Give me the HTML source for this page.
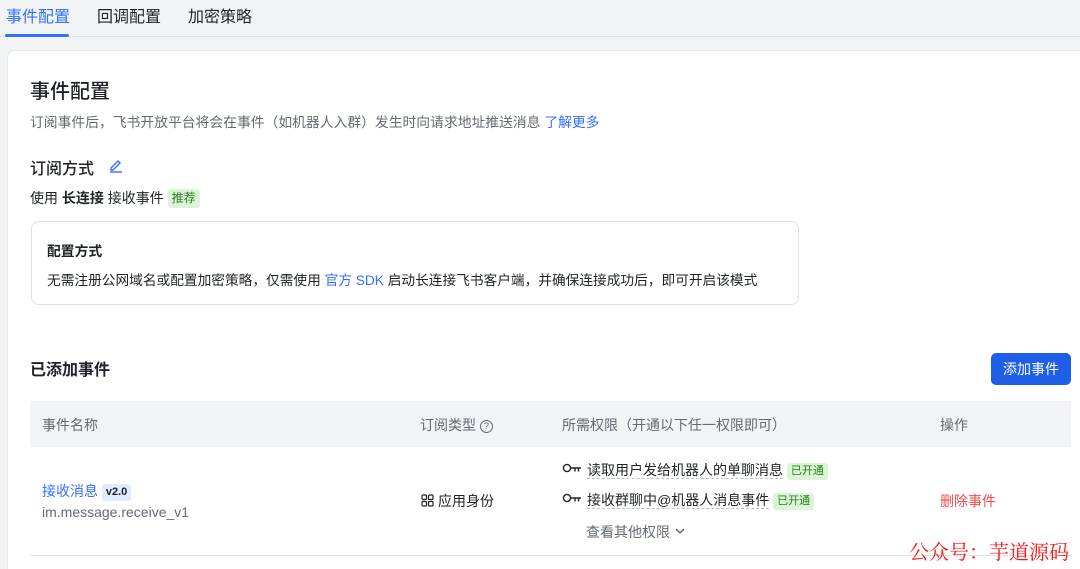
<!DOCTYPE html>
<html><head><meta charset="utf-8"><style>
*{margin:0;padding:0;box-sizing:border-box}
html,body{width:1080px;height:569px;overflow:hidden}
body{background:#f2f3f5;font-family:"Liberation Sans","Noto Sans CJK SC",sans-serif;color:#1f2329;position:relative}
.a{position:absolute;white-space:nowrap}
.card{position:absolute;left:7px;top:50px;width:1090px;height:530px;background:#fff;border-radius:8px;border:1px solid #e6e8eb}
.tag{display:inline-block;border-radius:3px;font-size:11px;padding:0 4px;line-height:17px;vertical-align:1px}
</style></head><body>
<div class="a" style="left:6px;top:3px;font-size:16px;color:#3370ff">事件配置</div>
<div class="a" style="left:97px;top:3px;font-size:16px;color:#1f2329">回调配置</div>
<div class="a" style="left:188px;top:3px;font-size:16px;color:#1f2329">加密策略</div>
<div class="a" style="left:0;top:36px;width:1080px;height:1px;background:#dee0e3"></div>
<div class="a" style="left:5px;top:34px;width:64px;height:3px;background:#3370ff;border-radius:2px"></div>
<div class="card"></div>
<div class="a" style="left:30px;top:75px;font-size:20px;font-weight:500">事件配置</div>
<div class="a" style="left:30px;top:111px;font-size:13.8px;color:#646a73">订阅事件后，飞书开放平台将会在事件（如机器人入群）发生时向请求地址推送消息 <span style="color:#3370ff">了解更多</span></div>
<div class="a" style="left:30px;top:155px;font-size:16px;font-weight:500">订阅方式</div>
<svg class="a" style="left:108px;top:157px" width="16" height="16" viewBox="0 0 16 16"><path d="M3 11l7-7 2 2-7 7H3z" fill="none" stroke="#3370ff" stroke-width="1.4"/><path d="M2 15h12" stroke="#3370ff" stroke-width="1.4"/></svg>
<div class="a" style="left:30px;top:188px;font-size:14px">使用 <b style="font-weight:600">长连接</b> 接收事件 <span class="tag" style="background:#d9f5d6;color:#2d7a1f;font-size:12px;line-height:19px">推荐</span></div>
<div class="a" style="left:31px;top:221px;width:768px;height:84px;border:1px solid #dee0e3;border-radius:8px"></div>
<div class="a" style="left:47px;top:240px;font-size:13.8px;font-weight:600">配置方式</div>
<div class="a" style="left:47px;top:269px;font-size:13.7px">无需注册公网域名或配置加密策略，仅需使用 <span style="color:#3370ff">官方 SDK</span> 启动长连接飞书客户端，并确保连接成功后，即可开启该模式</div>
<div class="a" style="left:30px;top:356px;font-size:16px;font-weight:600">已添加事件</div>
<div class="a" style="left:991px;top:353px;width:80px;height:32px;background:#1f5fe8;border-radius:5px;color:#fff;font-size:14px;line-height:32px;text-align:center">添加事件</div>
<div class="a" style="left:30px;top:401px;width:1041px;height:46px;background:#f2f3f5"></div>
<div class="a" style="left:42px;top:415px;font-size:14px;color:#646a73">事件名称</div>
<div class="a" style="left:420px;top:415px;font-size:14px;color:#646a73">订阅类型 <span style="display:inline-block;width:13px;height:13px;border:1px solid #646a73;border-radius:50%;font-size:9px;line-height:11px;text-align:center;vertical-align:1px">?</span></div>
<div class="a" style="left:562px;top:415px;font-size:14px;color:#646a73">所需权限（开通以下任一权限即可）</div>
<div class="a" style="left:940px;top:415px;font-size:14px;color:#646a73">操作</div>
<div class="a" style="left:42px;top:481px;font-size:14px;color:#3370ff">接收消息 <span class="tag" style="background:#e1eaff;color:#1f2329;font-weight:600">v2.0</span></div>
<div class="a" style="left:42px;top:504px;font-size:14px;color:#646a73">im.message.receive_v1</div>
<svg class="a" style="left:421px;top:494px" width="13" height="13" viewBox="0 0 13 13" fill="none" stroke="#1f2329" stroke-width="1.2"><rect x="1" y="1" width="4.5" height="4.5" rx="1"/><rect x="7.5" y="1" width="4.5" height="4.5" rx="1"/><rect x="1" y="7.5" width="4.5" height="4.5" rx="1"/><rect x="7.5" y="7.5" width="4.5" height="4.5" rx="1"/></svg>
<div class="a" style="left:438px;top:491px;font-size:14px">应用身份</div>
<svg class="a" style="left:562px;top:463px" width="20" height="12" viewBox="0 0 20 12" fill="none" stroke="#1f2329" stroke-width="1.4"><circle cx="5" cy="5" r="3.6"/><path d="M8.6 5H19M13 5v3.5M16.5 5v3.5"/></svg>
<div class="a" style="left:587px;top:460px;font-size:14px"><span style="border-bottom:1px dashed #bbbfc4">读取用户发给机器人的单聊消息</span> <span class="tag" style="background:#d9f5d6;color:#2d7a1f">已开通</span></div>
<svg class="a" style="left:562px;top:493px" width="20" height="12" viewBox="0 0 20 12" fill="none" stroke="#1f2329" stroke-width="1.4"><circle cx="5" cy="5" r="3.6"/><path d="M8.6 5H19M13 5v3.5M16.5 5v3.5"/></svg>
<div class="a" style="left:587px;top:490px;font-size:14px"><span style="border-bottom:1px dashed #bbbfc4">接收群聊中@机器人消息事件</span> <span class="tag" style="background:#d9f5d6;color:#2d7a1f">已开通</span></div>
<div class="a" style="left:586px;top:522px;font-size:14px;color:#646a73">查看其他权限</div>
<svg class="a" style="left:674px;top:526px" width="12" height="10" viewBox="0 0 12 10"><path d="M2 3l4 4 4-4" fill="none" stroke="#646a73" stroke-width="1.5"/></svg>
<div class="a" style="left:940px;top:491px;font-size:14px;color:#f54a45">删除事件</div>
<div class="a" style="left:30px;top:555px;width:1041px;height:1px;background:#dee0e3"></div>
<div class="a" style="left:909px;top:536px;font-size:20px;color:#ff1010;font-family:'Noto Serif CJK SC','Noto Sans CJK SC',serif">公众号：芋道源码</div>
</body></html>
